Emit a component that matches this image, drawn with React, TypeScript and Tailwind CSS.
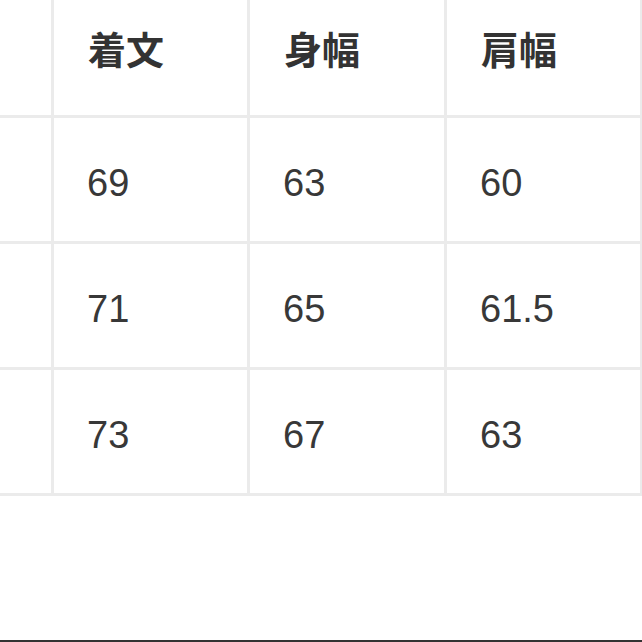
import React from "react";

const headers = ["着文", "身幅", "肩幅"];
const rows = [
  ["69", "63", "60"],
  ["71", "65", "61.5"],
  ["73", "67", "63"],
];

export default function App() {
  return (
    <div className="w-[642px] h-[642px] bg-white flex flex-col overflow-hidden">
      <div
        className="grid grid-cols-[51px_193px_194px_193px] grid-rows-[115px_123px_123px_123px] gap-[3px] bg-[#ebebeb] pr-[2px] pb-[3px] w-[642px]"
        style={{ fontFamily: '"Liberation Sans", Arial, sans-serif' }}
      >
        <div className="bg-white" />
        {headers.map((h) => (
          <div
            key={h}
            className="bg-white flex items-center pl-[34px] pb-[19px] text-[38px] font-bold leading-none text-[#333333]"
            style={{ fontFamily: '"Noto Sans CJK JP", "Noto Sans CJK SC", sans-serif' }}
          >
            {h}
          </div>
        ))}
        {rows.map((r, i) => (
          <React.Fragment key={i}>
            <div className="bg-white" />
            {r.map((v, j) => (
              <div
                key={j}
                className="bg-white flex items-center pl-[33px] pt-[6px] text-[38px] leading-none text-[#383838]"
              >
                {v}
              </div>
            ))}
          </React.Fragment>
        ))}
      </div>
      <div className="flex-1" />
      <div className="h-[2px] bg-[#333333]" />
    </div>
  );
}
